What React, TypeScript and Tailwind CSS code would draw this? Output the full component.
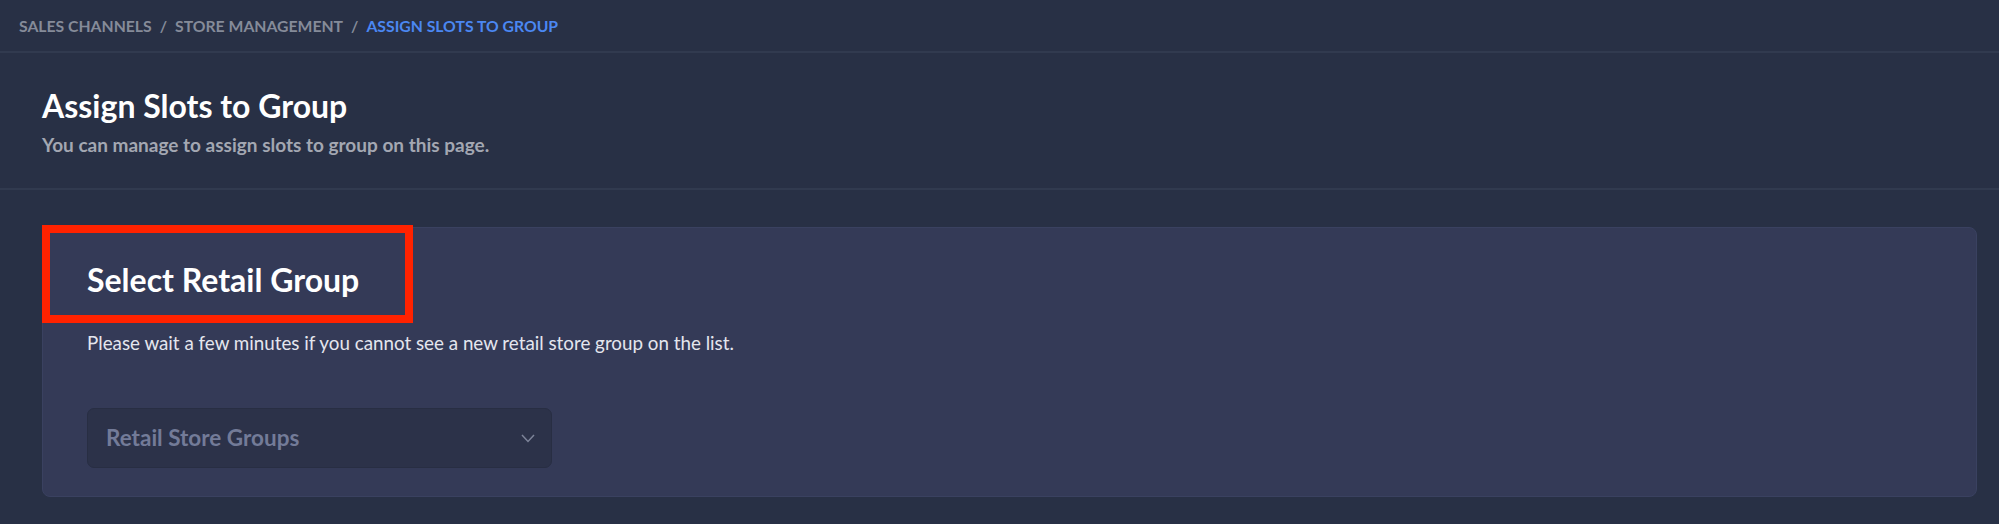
import React from "react";

export default function App() {
  return (
    <div
      className="w-[1999px] h-[524px] bg-[#283045] flex flex-col overflow-hidden"
      style={{ fontFamily: "Lato, 'Noto Sans', sans-serif" }}
    >
      {/* Breadcrumb */}
      <div className="h-[53px] shrink-0 border-b-2 border-[#313a4f] flex items-center pl-[19px]">
        <span className="text-[15.75px] font-bold uppercase text-[#858b99]">Sales Channels</span>
        <span className="text-[15.75px] font-bold text-[#858b99] mx-[8px]">/</span>
        <span className="text-[15.75px] font-bold uppercase text-[#858b99]">Store Management</span>
        <span className="text-[15.75px] font-bold text-[#858b99] mx-[8px]">/</span>
        <span className="text-[15.75px] font-bold uppercase text-[#4b87f2]">Assign Slots to Group</span>
      </div>

      {/* Header */}
      <div className="h-[137px] shrink-0 border-b-2 border-[#313a4f] flex flex-col pl-[42px] pt-[34px]">
        <h1 className="text-[32px] leading-[38px] font-bold text-white">Assign Slots to Group</h1>
        <p className="mt-[8px] text-[19px] leading-[24px] font-bold text-[#a3a7b2]">
          You can manage to assign slots to group on this page.
        </p>
      </div>

      {/* Content */}
      <div className="pl-[42px] pr-[22px] pt-[37px]">
        <div className="relative h-[270px] rounded-[8px] bg-[#343a57] border border-[#3a4160] pl-[44px] pt-[32px]">
          <div className="absolute left-[-1px] top-[-3px] w-[371px] h-[98px] border-[8px] border-[#ff2200]" />
          <h2 className="text-[32px] leading-[40px] font-bold text-white">Select Retail Group</h2>
          <p className="mt-[31px] text-[18.8px] leading-[24px] text-[#e4e6ee]">
            Please wait a few minutes if you cannot see a new retail store group on the list.
          </p>
          <div className="mt-[53px] w-[465px] h-[60px] rounded-[7px] bg-[#2c3249] border border-[#282e43] flex items-center justify-between pl-[18px] pr-[16px]">
            <span className="text-[22.5px] font-bold text-[#737b98]">Retail Store Groups</span>
            <svg width="14" height="9" viewBox="0 0 14 9" fill="none">
              <path d="M1 1l6 6.5L13 1" stroke="#7d8499" strokeWidth="1.5" />
            </svg>
          </div>
        </div>
      </div>
    </div>
  );
}
